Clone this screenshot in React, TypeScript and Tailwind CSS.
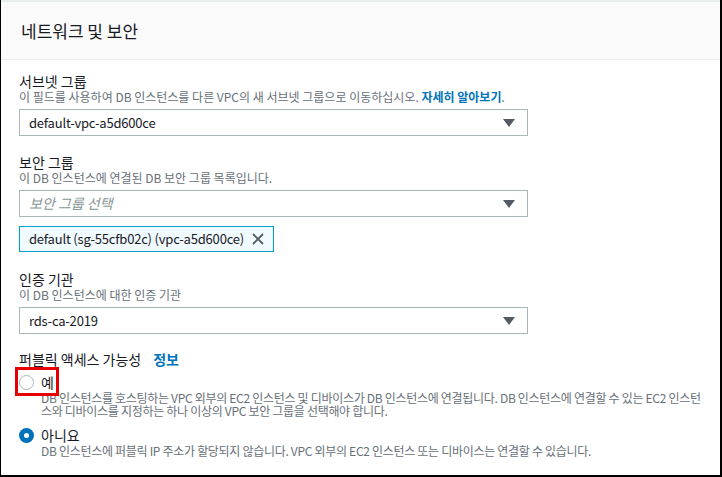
import { useState } from "react";

const FONT = { fontFamily: '"Noto Sans CJK KR", "Noto Sans", sans-serif' };

function Caret() {
  return (
    <svg width="12" height="8" viewBox="0 0 12 8" className="shrink-0">
      <path d="M0 0 H12 L6 8 Z" fill="#545b64" />
    </svg>
  );
}

function Select({ value, placeholder }: { value?: string; placeholder?: string }) {
  return (
    <div className="flex h-[27px] w-[509px] items-center justify-between border border-[#aab7b8] bg-white pl-[9px] pr-[12px]">
      {value ? (
        <span className="text-[13px] tracking-[-0.2px] text-[#16191f]">{value}</span>
      ) : (
        <span className="text-[14px] italic text-[#879596]">{placeholder}</span>
      )}
      <Caret />
    </div>
  );
}

function Field({
  label,
  desc,
  children,
}: {
  label: string;
  desc: React.ReactNode;
  children: React.ReactNode;
}) {
  return (
    <div className="flex flex-col">
      <div className="text-[14px] leading-[18px] text-[#16191f]">{label}</div>
      <div className="text-[12px] leading-[14px] text-[#687078]">{desc}</div>
      <div className="mt-[5px]">{children}</div>
    </div>
  );
}

function Radio({ checked }: { checked: boolean }) {
  if (checked)
    return (
      <span className="flex h-[15px] w-[15px] shrink-0 items-center justify-center rounded-full bg-[#0073bb]">
        <span className="h-[5px] w-[5px] rounded-full bg-white" />
      </span>
    );
  return <span className="h-[15px] w-[15px] shrink-0 rounded-full border border-[#aab7b8] bg-white" />;
}

export default function App() {
  const [pub, setPub] = useState(false);
  return (
    <div style={FONT} className="h-[477px] w-[722px] overflow-hidden bg-white">
      <div className="flex h-full w-full flex-col border-b-2 border-l border-r-2 border-black">
        <div className="flex h-[60px] shrink-0 items-center border-b border-t-2 border-[#eaeded] bg-[#fafafa] px-[20px]">
          <h2 className="text-[17px] text-[#16191f]">네트워크 및 보안</h2>
        </div>

        <div className="flex flex-col px-[18px] pt-[12px]">
          <Field
            label="서브넷 그룹"
            desc={
              <>
                이 필드를 사용하여 DB 인스턴스를 다른 VPC의 새 서브넷 그룹으로 이동하십시오.{" "}
                <span className="font-bold text-[#0073bb]">자세히 알아보기</span>.
              </>
            }
          >
            <Select value="default-vpc-a5d600ce" />
          </Field>

          <div className="mt-[17px]">
            <Field label="보안 그룹" desc="이 DB 인스턴스에 연결된 DB 보안 그룹 목록입니다.">
              <Select placeholder="보안 그룹 선택" />
            </Field>
            <div className="mt-[9px] flex h-[26px] w-[255px] items-center justify-between border border-[#00a1c9] bg-[#f1faff] pl-[9px] pr-[9px]">
              <span className="whitespace-nowrap text-[13px] tracking-[-0.2px] text-[#16191f]">
                default (sg-55cfb02c) (vpc-a5d600ce)
              </span>
              <svg width="12" height="12" viewBox="0 0 12 12" className="shrink-0">
                <path d="M1 1 L11 11 M11 1 L1 11" stroke="#545b64" strokeWidth="1.8" />
              </svg>
            </div>
          </div>

          <div className="mt-[18px]">
            <Field label="인증 기관" desc="이 DB 인스턴스에 대한 인증 기관">
              <Select value="rds-ca-2019" />
            </Field>
          </div>

          <div className="mt-[16px] flex items-center gap-[12px] text-[14px] leading-[18px]">
            <span className="text-[#16191f]">퍼블릭 액세스 가능성</span>
            <span className="font-bold text-[#0073bb]">정보</span>
          </div>

          <div className="relative mt-[5px] flex flex-col">
            <button type="button" onClick={() => setPub(true)} className="flex h-[18px] items-center gap-[7px] text-left">
              <Radio checked={pub} />
              <span className="text-[14px] leading-[18px] text-[#16191f]">예</span>
            </button>
            <div className="pl-[22px] text-[12px] leading-[13px] tracking-[-0.3px] text-[#687078]">
              <div className="whitespace-nowrap">
                DB 인스턴스를 호스팅하는 VPC 외부의 EC2 인스턴스 및 디바이스가 DB 인스턴스에 연결됩니다. DB 인스턴스에 연결할 수 있는 EC2 인스턴
              </div>
              <div className="whitespace-nowrap">스와 디바이스를 지정하는 하나 이상의 VPC 보안 그룹을 선택해야 합니다.</div>
            </div>
            <div className="pointer-events-none absolute left-[-4px] top-[-6px] h-[29px] w-[44px] border-[3px] border-[#e60000]" />

            <button type="button" onClick={() => setPub(false)} className="mt-[9px] flex h-[18px] items-center gap-[7px] text-left">
              <Radio checked={!pub} />
              <span className="text-[14px] leading-[18px] text-[#16191f]">아니요</span>
            </button>
            <div className="whitespace-nowrap pl-[22px] text-[12px] leading-[14px] tracking-[-0.3px] text-[#687078]">
              DB 인스턴스에 퍼블릭 IP 주소가 할당되지 않습니다. VPC 외부의 EC2 인스턴스 또는 디바이스는 연결할 수 있습니다.
            </div>
          </div>
        </div>
      </div>
    </div>
  );
}
